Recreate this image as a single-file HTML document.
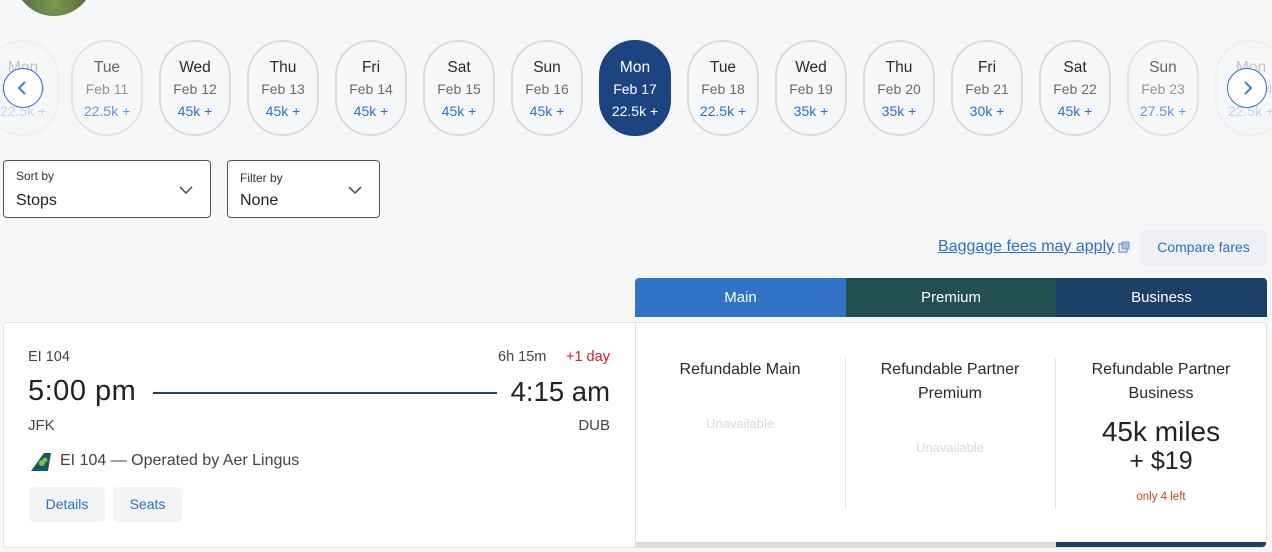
<!DOCTYPE html>
<html><head><meta charset="utf-8"><style>
*{box-sizing:border-box;margin:0;padding:0}
body{width:1272px;height:552px;background:#f6f7f9;font-family:"Liberation Sans",sans-serif;position:relative;overflow:hidden;color:#2c2c2c}
.a{position:absolute}
.pill{position:absolute;top:40px;width:72px;height:96px;border:2px solid #dcdcdc;border-radius:36px;text-align:center;background:#f6f7f9}
.pill .d{position:absolute;top:17px;left:0;right:0;font-size:15.5px;color:#2a2a2a}
.pill .f{position:absolute;top:39px;left:0;right:0;font-size:14px;color:#6b6b6b}
.pill .p{position:absolute;top:61px;left:0;right:0;font-size:14px;color:#2f6fc4}
.pill.sel{background:#1b4480;border-color:#1b4480}
.pill.sel .d,.pill.sel .f,.pill.sel .p{color:#fff}
.fade{opacity:.25}
.arrow{position:absolute;top:68px;width:40px;height:40px;border:1.5px solid #2f6fc4;border-radius:50%;background:#fff}
.sel2{position:absolute;top:160px;height:58px;border:1px solid #555;border-radius:4px;background:#fff}
.sel2 .l{position:absolute;left:12px;top:8px;font-size:12px;color:#333}
.sel2 .v{position:absolute;left:12px;top:31px;font-size:16px;color:#222}
.sel2 svg{position:absolute;top:24px}
.tab{position:absolute;top:278px;height:39px;color:#fff;font-size:15px;text-align:center;line-height:39px}
.col{position:absolute;top:358px;width:210px;text-align:center;font-size:16px;color:#2a2a2a;line-height:24px}
.un{color:#dadada;font-size:13px}
.btn{position:absolute;top:487px;height:35px;background:#f3f4f6;border-radius:5px;color:#2f6fc4;font-size:14px;line-height:35px;text-align:center}
</style></head><body>
<div class="a" style="left:14px;top:-64px;width:80px;height:80px;border-radius:50%;background:radial-gradient(circle at 50% 85%,#7a9a50,#4a5a3a 60%,#3a4030)"></div>

<div class="pill fade" style="left:-13px"><div class="d">Mon</div><div class="f">Feb 10</div><div class="p">22.5k +</div></div>
<div class="pill" style="left:71px;opacity:.7"><div class="d">Tue</div><div class="f">Feb 11</div><div class="p">22.5k +</div></div>
<div class="pill" style="left:159px"><div class="d">Wed</div><div class="f">Feb 12</div><div class="p">45k +</div></div>
<div class="pill" style="left:247px"><div class="d">Thu</div><div class="f">Feb 13</div><div class="p">45k +</div></div>
<div class="pill" style="left:335px"><div class="d">Fri</div><div class="f">Feb 14</div><div class="p">45k +</div></div>
<div class="pill" style="left:423px"><div class="d">Sat</div><div class="f">Feb 15</div><div class="p">45k +</div></div>
<div class="pill" style="left:511px"><div class="d">Sun</div><div class="f">Feb 16</div><div class="p">45k +</div></div>
<div class="pill sel" style="left:599px"><div class="d">Mon</div><div class="f">Feb 17</div><div class="p">22.5k +</div></div>
<div class="pill" style="left:687px"><div class="d">Tue</div><div class="f">Feb 18</div><div class="p">22.5k +</div></div>
<div class="pill" style="left:775px"><div class="d">Wed</div><div class="f">Feb 19</div><div class="p">35k +</div></div>
<div class="pill" style="left:863px"><div class="d">Thu</div><div class="f">Feb 20</div><div class="p">35k +</div></div>
<div class="pill" style="left:951px"><div class="d">Fri</div><div class="f">Feb 21</div><div class="p">30k +</div></div>
<div class="pill" style="left:1039px"><div class="d">Sat</div><div class="f">Feb 22</div><div class="p">45k +</div></div>
<div class="pill" style="left:1127px;opacity:.7"><div class="d">Sun</div><div class="f">Feb 23</div><div class="p">27.5k +</div></div>
<div class="pill fade" style="left:1215px"><div class="d">Mon</div><div class="f">Feb 24</div><div class="p">22.5k +</div></div>

<div class="arrow" style="left:3px"><svg width="40" height="40" style="position:absolute;left:-1.5px;top:-1.5px"><path d="M22 14l-6 6 6 6" fill="none" stroke="#2f6fc4" stroke-width="1.8"/></svg></div>
<div class="arrow" style="left:1227px"><svg width="40" height="40" style="position:absolute;left:-1.5px;top:-1.5px"><path d="M18 14l6 6-6 6" fill="none" stroke="#2f6fc4" stroke-width="1.8"/></svg></div>

<div class="sel2" style="left:3px;width:208px"><div class="l">Sort by</div><div class="v">Stops</div><svg style="left:175px" width="14" height="10"><path d="M1 2l6 6 6-6" fill="none" stroke="#444" stroke-width="1.5"/></svg></div>
<div class="sel2" style="left:227px;width:153px"><div class="l" style="top:10px">Filter by</div><div class="v">None</div><svg style="left:120px" width="14" height="10"><path d="M1 2l6 6 6-6" fill="none" stroke="#444" stroke-width="1.5"/></svg></div>

<div class="a" style="left:938px;top:238px;font-size:16px;color:#2f6fc4;text-decoration:underline">Baggage fees may apply</div>
<svg class="a" style="left:1118px;top:241px" width="12" height="12"><rect x="1" y="3" width="8" height="8" fill="none" stroke="#6d94d0" stroke-width="1.3"/><rect x="4" y="1" width="7" height="7" fill="#a9c0e5" stroke="#6d94d0" stroke-width="1"/></svg>
<div class="a" style="left:1140px;top:230px;width:127px;height:36px;background:#eef0f3;border-radius:5px;color:#2f6fc4;font-size:14px;line-height:34px;text-align:center">Compare fares</div>

<div class="tab" style="left:635px;width:211px;background:#3173c4;border-top-left-radius:4px">Main</div>
<div class="tab" style="left:846px;width:210px;background:#214f52">Premium</div>
<div class="tab" style="left:1056px;width:211px;background:#1b3f67;border-top-right-radius:4px">Business</div>

<div class="a" style="left:3px;top:322px;width:633px;height:226px;background:#fff;border:1px solid #e2e2e2;border-radius:4px 0 0 4px"></div>
<div class="a" style="left:635px;top:322px;width:632px;height:226px;background:#fff;border:1px solid #e2e2e2;border-radius:0 4px 4px 0"></div>
<div class="a" style="left:635px;top:542px;width:421px;height:5px;background:#dcdcdc"></div>
<div class="a" style="left:1056px;top:542px;width:210px;height:5px;background:#1b3f67;border-bottom-right-radius:4px"></div>

<div class="a" style="left:28px;top:349px;font-size:14.5px;color:#444">EI 104</div>
<div class="a" style="left:498px;top:349px;font-size:14.5px;color:#444">6h 15m</div>
<div class="a" style="left:566px;top:349px;font-size:14.5px;color:#d0202c">+1 day</div>
<div class="a" style="left:28px;top:375px;font-size:29px;letter-spacing:.5px;color:#222">5:00 pm</div>
<div class="a" style="right:662px;top:376px;font-size:27.5px;color:#222">4:15 am</div>
<div class="a" style="left:153px;top:392px;width:344px;height:2px;background:#1b3f7a"></div>
<div class="a" style="left:28px;top:417px;font-size:15px;color:#444">JFK</div>
<div class="a" style="right:662px;top:417px;font-size:15px;color:#444">DUB</div>
<svg class="a" style="left:30px;top:451px" width="22" height="22"><path d="M1 20L14 2h7l-3 18z" fill="#14595c"/><circle cx="12" cy="12" r="3" fill="#7bc043"/><circle cx="15" cy="9" r="2.4" fill="#7bc043"/></svg>
<div class="a" style="left:60px;top:452px;font-size:16px;color:#444">EI 104 — Operated by Aer Lingus</div>
<div class="btn" style="left:29px;width:76px">Details</div>
<div class="btn" style="left:113px;width:69px">Seats</div>

<div class="a" style="left:845px;top:358px;width:1px;height:150px;background:#e2e2e2"></div>
<div class="a" style="left:1055px;top:358px;width:1px;height:150px;background:#e2e2e2"></div>
<div class="col" style="left:635px">Refundable Main<div class="un" style="margin-top:30px">Unavailable</div></div>
<div class="col" style="left:845px">Refundable Partner<br>Premium<div class="un" style="margin-top:30px">Unavailable</div></div>
<div class="col" style="left:1056px">Refundable Partner<br>Business<div style="font-size:28px;color:#222;line-height:28px;margin-top:12px">45k miles<br><span style="font-size:25px">+ $19</span></div><div style="font-size:11.5px;color:#d0401c;margin-top:10px">only 4 left</div></div>
</body></html>
